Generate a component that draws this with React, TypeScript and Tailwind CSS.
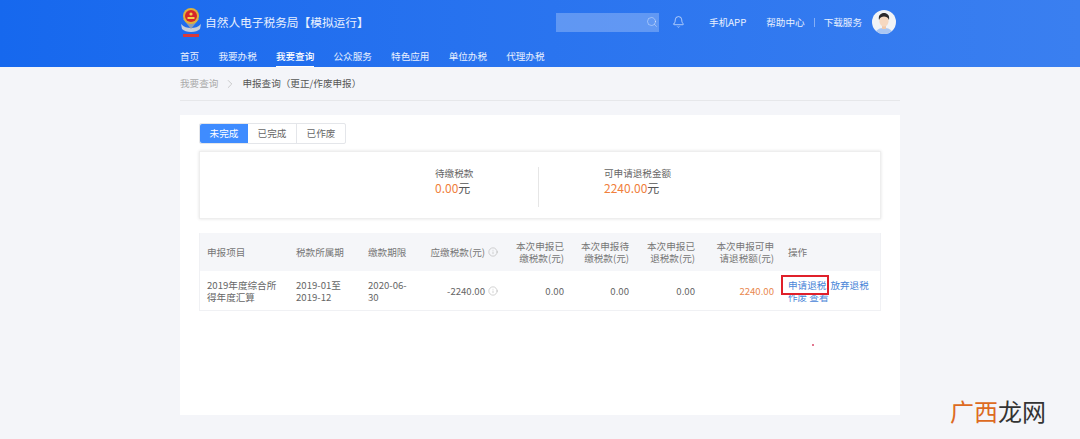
import { Bell, ChevronRight, Info, Search } from "lucide-react";

const navItems = ["首页", "我要办税", "我要查询", "公众服务", "特色应用", "单位办税", "代理办税"];

function Emblem() {
  return (
    <svg width="22" height="34" viewBox="0 0 22 34" className="shrink-0">
      <path d="M1 19c3 3 6 4 10 4s7-1 10-4l-1 5c-2 2-5 3-9 3s-7-1-9-3z" fill="#c9cfd8" />
      <path d="M3 14l8 10 8-10z" fill="#8d9cb4" />
      <circle cx="11" cy="11" r="8" fill="#e0b13a" />
      <circle cx="11" cy="11" r="6" fill="#d6262a" />
      <circle cx="11" cy="9" r="1.6" fill="#f4d24c" />
      <rect x="7.5" y="12" width="7" height="2" fill="#f4d24c" />
      <rect x="3" y="29" width="16" height="3" fill="#d8393a" />
    </svg>
  );
}

function Avatar() {
  return (
    <svg width="24" height="24" viewBox="0 0 24 24" className="shrink-0">
      <defs>
        <clipPath id="av">
          <circle cx="12" cy="12" r="12" />
        </clipPath>
      </defs>
      <g clipPath="url(#av)">
        <rect width="24" height="24" fill="#f1f3f6" />
        <path d="M3 24c1-5 5-6 9-6s8 1 9 6z" fill="#a9c6f3" />
        <rect x="10" y="14" width="4" height="5" fill="#f0c9ac" />
        <ellipse cx="12" cy="11" rx="4.6" ry="5.6" fill="#f6d8c0" />
        <path d="M7 10c-1-5 2-7 5-7s6 2 5 7c-1-3-3-3.500-5-3.500S8 7 7 10z" fill="#2c2a2c" />
      </g>
    </svg>
  );
}

function Header() {
  return (
    <header className="h-[67px] bg-gradient-to-r from-[#1668ee] to-[#3a7ff0] text-white">
      <div className="w-[720px] mx-auto h-full flex flex-col">
        <div className="h-[44px] flex items-center">
          <Emblem />
          <h1 className="ml-[3px] text-[11.7px] text-white/90">自然人电子税务局【模拟运行】</h1>
          <div className="ml-auto flex items-center text-[9.6px] text-white/90">
            <div className="w-[103px] h-[19px] bg-white/25 flex items-center justify-end pr-[1px]">
              <Search className="w-[12px] h-[12px] text-white/60" strokeWidth={1.25} />
            </div>
            <Bell className="ml-[13px] w-[13px] h-[14px] text-white/90" strokeWidth={1.25} />
            <span className="ml-[24px]">手机APP</span>
            <span className="ml-[20px]">帮助中心</span>
            <span className="mx-[9px] w-px h-[9px] bg-white/40" />
            <span>下载服务</span>
            <span className="ml-[10px] mr-[4px]">
              <Avatar />
            </span>
          </div>
        </div>
        <nav className="flex-1 flex gap-[19.2px] text-[9.6px] text-white/90">
          {navItems.map((item) => (
            <a
              key={item}
              className={item === "我要查询" ? "h-full pt-[5px] border-b border-white font-medium text-white" : "h-full pt-[5px]"}
            >
              {item}
            </a>
          ))}
        </nav>
      </div>
    </header>
  );
}

function SummaryBox() {
  return (
    <div className="mt-[7px] h-[68px] border border-[#eeeeee] shadow-[0_0_3px_rgba(0,0,0,0.12)] flex pl-[169px] pt-[15px]">
      <div className="w-[170px] h-[40px] pl-[66px] border-r border-[#e6e6e6]">
        <p className="text-[9.6px] leading-[13px] text-[#666666]">待缴税款</p>
        <p className="text-[12px] leading-[16px] text-[#555555]">
          <span className="text-[#f0803c]">0.00</span>元
        </p>
      </div>
      <div className="pl-[65px]">
        <p className="text-[9.6px] leading-[13px] text-[#666666]">可申请退税金额</p>
        <p className="text-[12px] leading-[16px] text-[#555555]">
          <span className="text-[#f0803c]">2240.00</span>元
        </p>
      </div>
    </div>
  );
}

function ResultTable() {
  return (
    <div className="mt-[14px] border border-[#f0f1f4] border-t-0 text-[9.6px] leading-[12px]">
      <div className="grid grid-cols-[89px_72px_63px_81px_66px_65px_66px_79px_1fr] h-[38px] items-center bg-[#f5f6f9] text-[#777777]">
        <div className="pl-[7px]">申报项目</div>
        <div className="pl-[7px]">税款所属期</div>
        <div className="pl-[7px]">缴款期限</div>
        <div className="pr-[7px] flex justify-end items-center gap-[3px]">
          应缴税款(元)
          <Info className="w-[10px] h-[10px] text-[#aaaaaa]" strokeWidth={1.25} />
        </div>
        <div className="pr-[7px] text-right">本次申报已<br />缴税款(元)</div>
        <div className="pr-[7px] text-right">本次申报待<br />缴税款(元)</div>
        <div className="pr-[7px] text-right">本次申报已<br />退税款(元)</div>
        <div className="pr-[7px] text-right">本次申报可申<br />请退税额(元)</div>
        <div className="pl-[7px]">操作</div>
      </div>
      <div className="grid grid-cols-[89px_72px_63px_81px_66px_65px_66px_79px_1fr] h-[39px] items-center text-[#666666]">
        <div className="pl-[7px]">2019年度综合所<br />得年度汇算</div>
        <div className="pl-[7px]">2019-01至<br />2019-12</div>
        <div className="pl-[7px]">2020-06-<br />30</div>
        <div className="pr-[7px] flex justify-end items-center gap-[3px]">
          -2240.00
          <Info className="w-[10px] h-[10px] text-[#aaaaaa]" strokeWidth={1.25} />
        </div>
        <div className="pr-[7px] text-right">0.00</div>
        <div className="pr-[7px] text-right">0.00</div>
        <div className="pr-[7px] text-right">0.00</div>
        <div className="pr-[7px] text-right text-[#e9884f]">2240.00</div>
        <div className="pl-[7px] text-[#4a86d8]">
          <a className="relative">
            申请退税
            <span className="absolute -left-[7px] -right-[3px] -top-[3px] -bottom-[3px] border-2 border-[#e0202a]" />
          </a>
          <a className="ml-[4px]">放弃退税</a>
          <br />
          <a>作废</a> <a>查看</a>
        </div>
      </div>
    </div>
  );
}

export default function App() {
  return (
    <div
      className="relative h-[439px] overflow-hidden bg-[#f4f5f9]"
      style={{ fontFamily: '"Noto Sans CJK SC", "Open Sans", sans-serif' }}
    >
      <Header />
      <main className="w-[720px] mx-auto">
        <div className="h-[34px] flex items-center border-b border-[#e6e7ea] text-[9.6px]">
          <span className="text-[#aaaaaa]">我要查询</span>
          <ChevronRight className="mx-[5px] w-[14px] h-[14px] text-[#aaaaaa]" strokeWidth={1} />
          <span className="text-[#555555]">申报查询（更正/作废申报）</span>
        </div>
        <section className="mt-[14px] h-[300px] bg-white px-[19px] pt-[8px]">
          <div className="flex w-fit border border-[#e4e6ea] rounded-[2px] text-[9.6px] text-[#666666]">
            <button className="w-[48px] h-[19px] bg-[#3f8cff] text-white rounded-l-[2px]">未完成</button>
            <button className="w-[49px] h-[19px] border-r border-[#e4e6ea]">已完成</button>
            <button className="w-[48px] h-[19px]">已作废</button>
          </div>
          <SummaryBox />
          <ResultTable />
        </section>
      </main>
      <span className="absolute left-[812px] top-[344px] w-[2px] h-[2px] rounded-full bg-[#d84a6a]" />
      <div className="absolute left-[950px] top-[395px] text-[24px] leading-[32px] text-[#333333]">
        <span className="text-[#dd6a22]">广西</span>龙网
      </div>
    </div>
  );
}
